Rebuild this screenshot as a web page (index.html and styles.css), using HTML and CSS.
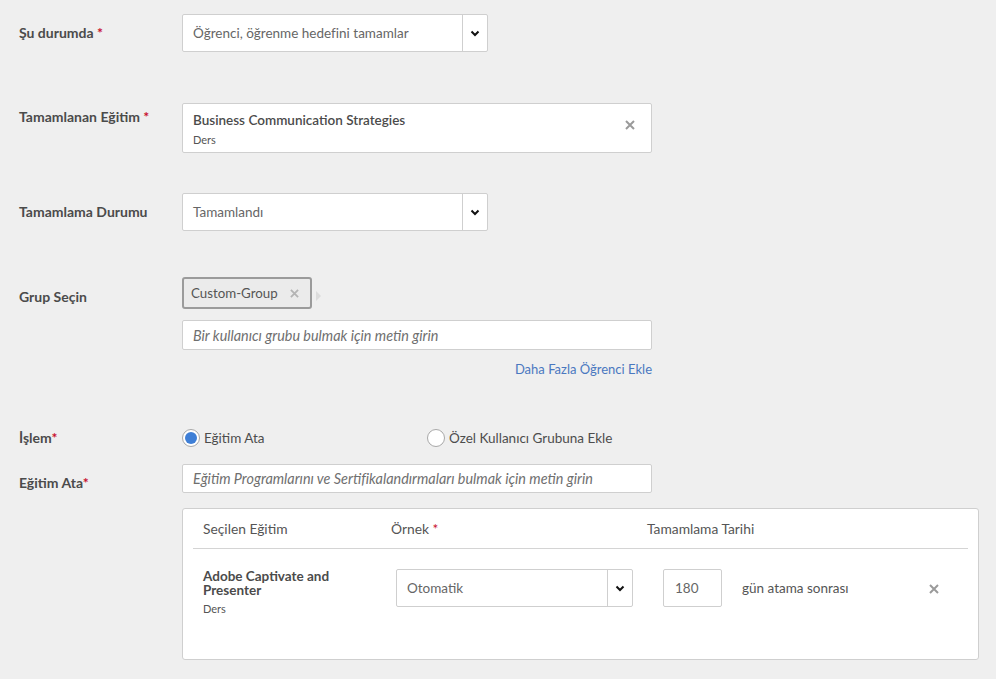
FILE: index.html
```html
<!DOCTYPE html>
<html lang="tr">
<head>
<meta charset="utf-8">
<title>Kural</title>
<link rel="stylesheet" href="styles.css">
</head>
<body>
<div class="form">
  <div class="row r1">
    <div class="label">Şu durumda <span class="req">*</span></div>
    <div class="field">
      <div class="select w305">
        <span class="select-text">Öğrenci, öğrenme hedefini tamamlar</span>
        <span class="select-btn"><svg width="10" height="7" viewBox="0 0 10 7"><polyline points="1.5,1.5 5,5 8.5,1.5" fill="none" stroke="#111" stroke-width="2"/></svg></span>
      </div>
    </div>
  </div>

  <div class="row r2">
    <div class="label l-top">Tamamlanan Eğitim <span class="req">*</span></div>
    <div class="field">
      <div class="picked">
        <div>
          <div class="picked-title">Business Communication Strategies</div>
          <div class="picked-sub">Ders</div>
        </div>
        <span class="x-icon"><svg width="10" height="10" viewBox="0 0 10 10"><path d="M1 1L9 9M9 1L1 9" stroke="#9a9a9a" stroke-width="2"/></svg></span>
      </div>
    </div>
  </div>

  <div class="row r3">
    <div class="label">Tamamlama Durumu</div>
    <div class="field">
      <div class="select w305">
        <span class="select-text">Tamamlandı</span>
        <span class="select-btn"><svg width="10" height="7" viewBox="0 0 10 7"><polyline points="1.5,1.5 5,5 8.5,1.5" fill="none" stroke="#111" stroke-width="2"/></svg></span>
      </div>
    </div>
  </div>

  <div class="row r4">
    <div class="label l-four">Grup Seçin</div>
    <div class="field">
      <div class="chip-line">
        <div class="chip">Custom-Group <span class="chip-x"><svg width="9" height="9" viewBox="0 0 10 10"><path d="M1 1L9 9M9 1L1 9" stroke="#b4b4b4" stroke-width="2"/></svg></span></div>
        <span class="chip-tri"></span>
      </div>
      <div class="input w469 h29"><span class="ph">Bir kullanıcı grubu bulmak için metin girin</span></div>
      <div class="link-line w469"><a class="link">Daha Fazla Öğrenci Ekle</a></div>
    </div>
  </div>

  <div class="row r5">
    <div class="label l-radio">İşlem<span class="req">*</span></div>
    <div class="field radios">
      <label class="radio radio-1"><span class="dot on"></span>Eğitim Ata</label>
      <label class="radio"><span class="dot"></span>Özel Kullanıcı Grubuna Ekle</label>
    </div>
  </div>

  <div class="row r6">
    <div class="label l-six">Eğitim Ata<span class="req">*</span></div>
    <div class="field">
      <div class="input w469 h28"><span class="ph">Eğitim Programlarını ve Sertifikalandırmaları bulmak için metin girin</span></div>
      <div class="card">
        <div class="card-head">
          <span class="hc1">Seçilen Eğitim</span>
          <span class="hc2">Örnek <span class="req">*</span></span>
          <span class="hc3">Tamamlama Tarihi</span>
        </div>
        <div class="card-row">
          <div class="c1">
            <div class="c-title">Adobe Captivate and Presenter</div>
            <div class="picked-sub">Ders</div>
          </div>
          <div class="select w236">
            <span class="select-text">Otomatik</span>
            <span class="select-btn"><svg width="10" height="7" viewBox="0 0 10 7"><polyline points="1.5,1.5 5,5 8.5,1.5" fill="none" stroke="#111" stroke-width="2"/></svg></span>
          </div>
          <div class="num">180</div>
          <div class="days">gün atama sonrası</div>
          <span class="row-x"><svg width="10" height="10" viewBox="0 0 10 10"><path d="M1 1L9 9M9 1L1 9" stroke="#9a9a9a" stroke-width="2"/></svg></span>
        </div>
      </div>
    </div>
  </div>
</div>
</body>
</html>
```

FILE: styles.css
```css
* { box-sizing: border-box; }
html, body {
  margin: 0;
  background: #efefef;
}
body {
  font-family: Lato, "Open Sans", "Liberation Sans", sans-serif;
  font-size: 13.5px;
  color: #4d4d4d;
  width: 996px;
  height: 679px;
  overflow: hidden;
}
.form {
  padding: 14px 0 0 19px;
}
.row {
  display: grid;
  grid-template-columns: 163px 1fr;
  align-items: start;
}
.r2 { margin-top: 51px; }
.r3 { margin-top: 40px; }
.r4 { margin-top: 46px; }
.r5 { margin-top: 49px; }
.r6 { margin-top: 14px; }

.label {
  font-weight: 700;
  font-size: 14px;
  color: #4b4b4b;
  line-height: 16px;
  padding-top: 11px;
}
.l-top { padding-top: 6px; }
.l-four { padding-top: 12px; }
.l-radio { padding-top: 4px; }
.l-six { padding-top: 11px; }
.req { color: #c8102e; }

.select {
  display: flex;
  align-items: center;
  height: 38px;
  background: #fff;
  border: 1px solid #cfcfcf;
  border-radius: 2px;
}
.w305 { width: 306px; }
.w236 { width: 237px; }
.select-text {
  flex: 1;
  padding-left: 10px;
  color: #666;
}
.select-btn {
  width: 25px;
  height: 100%;
  border-left: 1px solid #cfcfcf;
  display: flex;
  align-items: center;
  justify-content: center;
}

.picked {
  width: 470px;
  height: 50px;
  background: #fff;
  border: 1px solid #cfcfcf;
  border-radius: 2px;
  display: flex;
  justify-content: space-between;
  align-items: flex-start;
  padding: 8px 16px 0 10px;
}
.picked-title {
  font-weight: 600;
  color: #4b4b4b;
  line-height: 16px;
}
.picked-sub {
  font-size: 11px;
  color: #555;
  line-height: 14px;
  margin-top: 5px;
}
.x-icon { margin-top: 8px; display: flex; }

.chip-line {
  display: flex;
  align-items: center;
  height: 32px;
}
.chip {
  width: 130px;
  height: 32px;
  border: 2px solid #9b9b9b;
  border-radius: 3px;
  background: #ebebeb;
  display: flex;
  align-items: center;
  justify-content: space-between;
  padding: 0 11px 0 7px;
  color: #555;
  font-size: 13.3px;
}
.chip-x { display: flex; }
.chip-tri {
  margin: 6px 0 0 4px;
  width: 0;
  height: 0;
  border-top: 5px solid transparent;
  border-bottom: 5px solid transparent;
  border-left: 5px solid #dcdcdc;
}

.input {
  background: #fff;
  border: 1px solid #cfcfcf;
  border-radius: 2px;
  display: flex;
  align-items: center;
  padding-left: 10px;
}
.w469 { width: 470px; }
.h29 { height: 30px; margin-top: 11px; }
.h28 { height: 29px; }
.ph {
  font-style: italic;
  font-size: 14.4px;
  color: #6f6f6f;
}
.link-line {
  text-align: right;
  margin-top: 11px;
  line-height: 16px;
  font-size: 13px;
}
.link {
  color: #4a78c0;
}

.radios {
  display: flex;
  align-items: center;
  height: 24px;
}
.radio {
  display: flex;
  align-items: center;
  color: #4d4d4d;
}
.radio-1 { width: 245px; }
.dot {
  width: 18px;
  height: 18px;
  border-radius: 50%;
  border: 1px solid #a8a8a8;
  background: #fff;
  margin-right: 4px;
  position: relative;
}
.dot.on::after {
  content: "";
  position: absolute;
  left: 2px;
  top: 2px;
  width: 12px;
  height: 12px;
  border-radius: 50%;
  background: #3f7fd6;
}

.card {
  margin-top: 15px;
  width: 797px;
  height: 152px;
  background: #fff;
  border: 1px solid #cfcfcf;
  border-radius: 3px;
}
.card-head {
  margin: 0 10px;
  height: 40px;
  border-bottom: 1px solid #d4d4d4;
  display: flex;
  align-items: center;
  padding: 0 0 0 10px;
  color: #555;
  font-size: 13.8px;
}
.hc1 { width: 188px; }
.hc2 { width: 256px; }
.card-row {
  display: flex;
  align-items: flex-start;
  padding: 20px 0 0 20px;
}
.c1 { width: 193px; }
.c-title {
  width: 150px;
  font-weight: 700;
  color: #4b4b4b;
  line-height: 14px;
}
.c1 .picked-sub { margin-top: 5px; }
.num {
  margin-left: 30px;
  width: 59px;
  height: 38px;
  border: 1px solid #cfcfcf;
  border-radius: 2px;
  padding: 10px 0 0 11px;
  line-height: 16px;
  color: #666;
}
.days {
  margin-left: 20px;
  padding-top: 11px;
  line-height: 16px;
  color: #555;
  width: 187px;
}
.row-x {
  padding-top: 15px;
  display: flex;
}
```
